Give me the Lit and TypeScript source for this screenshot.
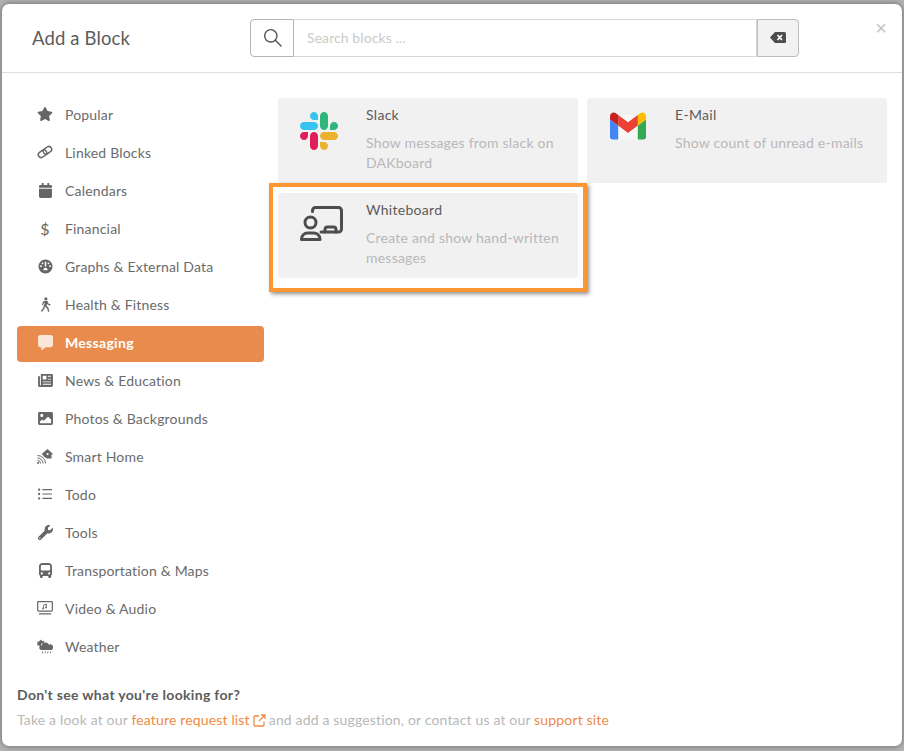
import { LitElement, html, css, svg } from "lit";
import { customElement } from "lit/decorators.js";

const I: Record<string, unknown> = {
  star: svg`<svg viewBox="0 0 576 512" width="16" height="14"><path d="M259.3 17.8L194 150.2 47.9 171.5c-26.2 3.8-36.7 36.1-17.7 54.6l105.7 103-25 145.5c-4.5 26.3 23.2 46 46.4 33.7L288 439.6l130.7 68.7c23.2 12.2 50.9-7.4 46.4-33.7l-25-145.5 105.7-103c19-18.5 8.5-50.8-17.7-54.6L382 150.2 316.7 17.8c-11.7-23.6-45.6-23.9-57.4 0z"/></svg>`,
  link: svg`<svg viewBox="0 0 16 14" width="16" height="14"><g fill="none" stroke="currentColor" stroke-width="1.500" transform="rotate(-35 8 7)"><rect x="0.500" y="4.200" width="9" height="5.600" rx="2.800"/><rect x="6.500" y="4.200" width="9" height="5.600" rx="2.800"/></g></svg>`,
  cal: svg`<svg viewBox="0 0 14 16" width="13" height="15"><path d="M3 0h2v2h4V0h2v2h1.500A1.500 1.500 0 0 1 14 3.500V5H0V3.500A1.500 1.500 0 0 1 1.500 2H3zM0 6h14v8.500a1.500 1.500 0 0 1-1.500 1.500h-11A1.500 1.500 0 0 1 0 14.500z"/></svg>`,
  gauge: svg`<svg viewBox="0 0 16 16" width="15" height="15"><path fill-rule="evenodd" d="M8 .5a7.500 7.500 0 1 1 0 15 7.500 7.500 0 0 1 0-15zM7.200 3v5h1.600V3zM3.200 6.600a1 1 0 1 0 0 2 1 1 0 0 0 0-2zM12.800 6.600a1 1 0 1 0 0 2 1 1 0 0 0 0-2zM4.800 3.600a1 1 0 1 0 0 2 1 1 0 0 0 0-2zM11.200 3.600a1 1 0 1 0 0 2 1 1 0 0 0 0-2zM8 9.200a2.200 2.200 0 0 0-2.200 2.200v.6h4.400v-.6A2.200 2.200 0 0 0 8 9.200z"/></svg>`,
  walk: svg`<svg viewBox="0 0 12 16" width="11" height="15"><circle cx="6.400" cy="1.700" r="1.700"/><path d="M4.600 4.200 6.800 4c1 0 1.500.6 1.800 1.300l.6 1.600 1.900.9c.8.4.3 1.500-.5 1.200L8.300 8 7.800 7l-.6 2.400 2 2.200.9 3.500c.2 1-1.200 1.300-1.500.3l-.8-3-2.300-2.200-.7 2.500-2.300 2.800c-.7.8-1.800-.1-1.200-.9l2-2.500L5.300 6l-1 .4-.7 2c-.3.9-1.600.5-1.300-.4l.8-2.500c.3-.8 1-1.200 1.500-1.300z"/></svg>`,
  chat: svg`<svg viewBox="0 0 16 16" width="15" height="15"><path d="M2.500 0h11A2.500 2.500 0 0 1 16 2.500v8a2.500 2.500 0 0 1-2.500 2.500H8l-3.600 3c-.4.3-.8 0-.8-.4V13H2.500A2.500 2.500 0 0 1 0 10.500v-8A2.500 2.500 0 0 1 2.500 0z"/></svg>`,
  news: svg`<svg viewBox="0 0 16 14" width="15" height="13"><path fill-rule="evenodd" d="M3 0h12a1 1 0 0 1 1 1v11a2 2 0 0 1-2 2H2a2 2 0 0 1-2-2V2.500h2V12a.5.5 0 0 0 1 0zM5 2v4h4V2zM10.500 2v1H14V2zM10.500 5v1H14V5zM5 8v1h9V8zM5 10.500v1h9v-1z"/></svg>`,
  image: svg`<svg viewBox="0 0 16 14" width="15" height="13"><path fill-rule="evenodd" d="M1.500 0h13A1.500 1.500 0 0 1 16 1.500v11a1.500 1.500 0 0 1-1.500 1.500h-13A1.500 1.500 0 0 1 0 12.500v-11A1.500 1.500 0 0 1 1.500 0zM4 2a1.700 1.700 0 1 0 0 3.400A1.700 1.700 0 0 0 4 2zM2 12h12V8.200L10.700 5 6 9.500 4.500 8 2 10.300z"/></svg>`,
  home: svg`<svg viewBox="0 0 16 15" width="16" height="15"><path fill-rule="evenodd" d="M10.500 0 16 5l-.7.8-.8-.7V9.500H9.800L6.200 7V5.200l-.9.7-.6-.8zM9.500 5a1.100 1.100 0 1 0 2.200 0 1.100 1.100 0 0 0-2.200 0z"/><g fill="none" stroke="currentColor" stroke-width="1"><path d="M.5 6.500a8 8 0 0 1 8 8"/><path d="M.5 9a5.500 5.500 0 0 1 5.500 5.500"/><path d="M.5 11.500a3 3 0 0 1 3 3"/></g><circle cx="1" cy="14" r="1"/></svg>`,
  list: svg`<svg viewBox="0 0 16 13" width="14" height="12"><circle cx="1.300" cy="1.500" r="1.300"/><circle cx="1.300" cy="6.500" r="1.300"/><circle cx="1.300" cy="11.500" r="1.300"/><path d="M5 .8h11v1.400H5zM5 5.800h11v1.400H5zM5 10.800h11v1.400H5z"/></svg>`,
  wrench: svg`<svg viewBox="0 0 512 512" width="15" height="15"><path d="M507.73 109.1c-2.24-9.03-13.54-12.09-20.12-5.51l-74.36 74.36-67.88-11.31-11.31-67.88 74.36-74.36c6.62-6.62 3.43-17.9-5.66-20.16-47.38-11.74-99.55.91-136.58 37.93-39.64 39.64-50.55 97.1-34.05 147.2L18.74 402.76c-24.99 24.99-24.99 65.51 0 90.5 24.99 24.99 65.51 24.99 90.5 0l213.21-213.21c50.12 16.71 107.47 5.68 147.37-34.22 37.07-37.07 49.7-89.32 37.91-136.73zM64 472c-13.25 0-24-10.75-24-24 0-13.26 10.75-24 24-24s24 10.74 24 24c0 13.25-10.75 24-24 24z"/></svg>`,
  bus: svg`<svg viewBox="0 0 14 16" width="13" height="15"><path fill-rule="evenodd" d="M4 0h6a4 4 0 0 1 4 4v8a1.500 1.500 0 0 1-1 1.400V15a1 1 0 0 1-1 1h-1a1 1 0 0 1-1-1v-1H4v1a1 1 0 0 1-1 1H2a1 1 0 0 1-1-1v-1.600A1.500 1.500 0 0 1 0 12V4a4 4 0 0 1 4-4zM3.500 2A1.500 1.500 0 0 0 2 3.500V7a1 1 0 0 0 1 1h8a1 1 0 0 0 1-1V3.500A1.500 1.500 0 0 0 10.500 2zM3 10a1.200 1.200 0 1 0 0 2.400A1.200 1.200 0 0 0 3 10zM11 10a1.200 1.200 0 1 0 0 2.400 1.200 1.200 0 0 0 0-2.400z"/></svg>`,
  video: svg`<svg viewBox="0 0 17 15" width="16" height="14"><path fill-rule="evenodd" d="M1.500 0h14A1.500 1.500 0 0 1 17 1.500V10a1.500 1.500 0 0 1-1.500 1.500h-14A1.500 1.500 0 0 1 0 10V1.500A1.500 1.500 0 0 1 1.500 0zM1.300 1.300v8.900h14.400V1.300z"/><path d="M2 13h13v1.500H2zM10.500 3v4a1 1 0 1 1-.8-1V4.200L7.400 4.800V8a1 1 0 1 1-.8-1V3.900z"/></svg>`,
  weather: svg`<svg viewBox="0 0 18 16" width="17" height="15"><path d="M4.500 0l1.200 2L8 1.500l.2 2.200A4 4 0 0 0 4.200 7.500L3.500 8 2 6.500l-2 .3.700-2L0 3l2.200-.6z"/><path d="M5 12a2.500 2.500 0 0 1 0-5 4.500 4.500 0 0 1 8.500-1A3 3 0 0 1 18 9a3 3 0 0 1-3 3z"/><path d="M6 13.500h1l-.6 2h-1zM9 13.500h1l-.6 2h-1zM12 13.500h1l-.6 2h-1zM15 13.500h1l-.6 2h-1z"/></svg>`,
};

const MENU: [string, string][] = [
  ["star", "Popular"], ["link", "Linked Blocks"], ["cal", "Calendars"], ["$", "Financial"],
  ["gauge", "Graphs & External Data"], ["walk", "Health & Fitness"], ["chat", "Messaging"],
  ["news", "News & Education"], ["image", "Photos & Backgrounds"], ["home", "Smart Home"],
  ["list", "Todo"], ["wrench", "Tools"], ["bus", "Transportation & Maps"],
  ["video", "Video & Audio"], ["weather", "Weather"],
];

const slack = svg`<svg viewBox="0 0 122.800 122.800" width="38" height="38">
<path fill="#E01E5A" d="M25.800 77.600c0 7.100-5.800 12.900-12.900 12.900S0 84.700 0 77.600s5.800-12.900 12.900-12.900h12.900v12.900z"/><path fill="#E01E5A" d="M32.300 77.600c0-7.100 5.800-12.900 12.900-12.900s12.900 5.800 12.900 12.900v32.300c0 7.100-5.800 12.900-12.900 12.900s-12.900-5.800-12.900-12.900V77.600z"/>
<path fill="#36C5F0" d="M45.200 25.800c-7.100 0-12.900-5.800-12.900-12.900S38.100 0 45.200 0s12.900 5.800 12.900 12.900v12.900H45.200z"/><path fill="#36C5F0" d="M45.200 32.300c7.100 0 12.900 5.800 12.900 12.900s-5.800 12.900-12.900 12.900H12.900C5.800 58.100 0 52.300 0 45.200s5.800-12.900 12.900-12.900h32.300z"/>
<path fill="#2EB67D" d="M97 45.200c0-7.100 5.800-12.900 12.900-12.900s12.900 5.800 12.900 12.900-5.800 12.900-12.900 12.900H97V45.200z"/><path fill="#2EB67D" d="M90.500 45.200c0 7.100-5.800 12.900-12.900 12.900s-12.900-5.800-12.900-12.900V12.900C64.700 5.800 70.500 0 77.600 0s12.900 5.800 12.900 12.900v32.300z"/>
<path fill="#ECB22E" d="M77.600 97c7.100 0 12.900 5.800 12.900 12.900s-5.800 12.900-12.900 12.900-12.900-5.800-12.900-12.900V97h12.900z"/><path fill="#ECB22E" d="M77.600 90.500c-7.100 0-12.900-5.800-12.900-12.900s5.800-12.900 12.900-12.900h32.300c7.100 0 12.900 5.800 12.900 12.900s-5.800 12.900-12.900 12.900H77.600z"/></svg>`;

const gmail = svg`<svg viewBox="52 42 88 66" width="36" height="28">
<path fill="#f7f7f7" d="M72 48h48v60H72z"/>
<path fill="#4285f4" d="M58 108h14V74L52 59v43c0 3.320 2.690 6 6 6"/><path fill="#34a853" d="M120 108h14c3.320 0 6-2.690 6-6V59l-20 15"/>
<path fill="#fbbc04" d="M120 48v26l20-15v-8c0-7.420-8.470-11.650-14.400-7.200"/><path fill="#ea4335" d="M72 74V48l24 18 24-18v26L96 92"/>
<path fill="#c5221f" d="M52 51v8l20 15V48l-5.600-4.200c-5.940-4.450-14.400-.22-14.400 7.200"/></svg>`;

const board = svg`<svg viewBox="0 0 44 36" width="44" height="36"><g fill="none" stroke="#4d4d4d" stroke-width="3" stroke-linecap="round" stroke-linejoin="round">
<path d="M12.500 5.500V4.500a3 3 0 0 1 3-3H38.500A3 3 0 0 1 41.500 4.500V23a3 3 0 0 1-3 3H21"/><path d="M25 26v-2.500a2.500 2.500 0 0 1 2.500-2.500h6a2.500 2.500 0 0 1 2.500 2.500V26"/>
<circle cx="10.500" cy="16.500" r="5.500"/><path d="M1.500 33.500v-.5a6 6 0 0 1 6-6h6a6.500 6.500 0 0 1 6.500 6v.5z"/></g></svg>`;

@customElement("app-root")
export class AppRoot extends LitElement {
  static styles = css`
    :host { display: block; height: 751px; background: #b3b3b1; overflow: hidden; font-family: "Lato", "Noto Sans", sans-serif; font-size: 14px; color: #6b6b6b; letter-spacing: .18px; }
    .modal { box-sizing: border-box; margin: 0 2px; position: relative; top: 4px; height: 742px; background: #fff; border-radius: 7px; box-shadow: 0 0 6px rgba(0,0,0,.45); }
    .head { display: flex; align-items: center; height: 69px; box-sizing: border-box; border-bottom: 1px solid #dfdfdf; padding: 0 0 0 30px; }
    h1 { margin: 0; width: 218px; font-weight: 400; font-size: 18.500px; color: #5c5c5c; letter-spacing: .13px; }
    .search { display: flex; width: 549px; height: 38px; margin-top: -1px; }
    .s-ico { box-sizing: border-box; width: 44px; border: 1px solid #b5b5b5; border-radius: 4px 0 0 4px; display: flex; align-items: center; justify-content: center; }
    .s-in { flex: 1; border: 1px solid #d8d8d8; border-left: 0; color: #cbcbcb; display: flex; align-items: center; padding-left: 13px; letter-spacing: .08px; }
    .s-btn { box-sizing: border-box; width: 42px; background: #f2f2f2; border: 1px solid #bdbdbd; border-radius: 0 4px 4px 0; display: flex; align-items: center; justify-content: center; }
    .close { position: absolute; right: 15px; top: 15px; color: #c4c4c4; font: 400 20px/18px "Liberation Sans", sans-serif; letter-spacing: 0; }
    .body { display: flex; padding: 25px 0 0 15px; gap: 14px; }
    nav { width: 247px; display: flex; flex-direction: column; gap: 2px; }
    .item { box-sizing: border-box; height: 36px; border-radius: 4px; display: flex; align-items: center; padding: 0 0 4px 20px; color: #6b6b6b; }
    .item.on { background: #e88b4c; color: #fff; font-weight: 700; letter-spacing: .3px; }
    .item.on .ic { color: #fbe6d8; fill: #fbe6d8; }
    .ic { width: 16px; height: 16px; margin-right: 12px; display: flex; align-items: center; justify-content: center; fill: #666; color: #666; flex: none; font-size: 16px; letter-spacing: 0; }
    .grid { display: grid; grid-template-columns: 300px 300px; grid-auto-rows: 85px; gap: 10px 9px; align-content: start; }
    .card { position: relative; display: flex; background: #f1f1f1; border-radius: 3px; }
    .logo { width: 88px; flex: none; display: flex; justify-content: center; padding: 14px 6px 0 0; box-sizing: border-box; }
    .logo.w { padding: 13px 1px 0 0; }
    .t { padding-top: 7px; line-height: 20px; }
    .t b { display: block; font-weight: 400; color: #5c5c5c; margin-bottom: 8px; letter-spacing: .3px; }
    .t span { display: block; color: #b8b8b8; letter-spacing: .22px; }
    .hl { position: absolute; inset: -10px -9px -14px -9px; border: 4px solid #fb9632; box-shadow: 2px 2px 4px rgba(0,0,0,.45); pointer-events: none; }
    footer { padding: 19px 0 0 15px; }
    .q { font-weight: 700; color: #5c5c5c; line-height: 20px; letter-spacing: .32px; }
    .a { margin-top: 5px; line-height: 20px; color: #b8b8b8; display: flex; white-space: pre; align-items: center; letter-spacing: .16px; }
    .a em { font-style: normal; color: #ee8a45; }
    .ext { margin: 0 3px 0 3px; display: flex; }
  `;

  render() {
    return html`<div class="modal">
      <div class="head">
        <h1>Add a Block</h1>
        <div class="search">
          <div class="s-ico"><svg viewBox="0 0 20 20" width="19" height="19" fill="none" stroke="#555" stroke-width="1.500"><circle cx="8.200" cy="8.200" r="6.500"/><path d="M13 13l6 6" stroke-linecap="round"/></svg></div>
          <div class="s-in">Search blocks ...</div>
          <div class="s-btn"><svg viewBox="0 0 16 11" width="16" height="11"><path fill="#4d4d4d" d="M5 0h9.500A1.500 1.500 0 0 1 16 1.500v8a1.500 1.500 0 0 1-1.500 1.500H5L0 5.500z"/><path stroke="#fff" stroke-width="1.700" d="M7.500 3l4.500 5M12 3 7.500 8"/></svg></div>
        </div>
        <div class="close">×</div>
      </div>
      <div class="body">
        <nav>${MENU.map(([ic, label]) => html`<div class="item ${label === "Messaging" ? "on" : ""}"><span class="ic">${ic === "$" ? "$" : I[ic]}</span>${label}</div>`)}</nav>
        <div class="grid">
          <div class="card"><div class="logo">${slack}</div><div class="t"><b>Slack</b><span>Show messages from slack on DAKboard</span></div></div>
          <div class="card"><div class="logo">${gmail}</div><div class="t"><b>E-Mail</b><span>Show count of unread e-mails</span></div></div>
          <div class="card"><div class="logo w">${board}</div><div class="t"><b>Whiteboard</b><span>Create and show hand-written messages</span></div><div class="hl"></div></div>
        </div>
      </div>
      <footer>
        <div class="q">Don't see what you're looking for?</div>
        <div class="a">Take a look at our <em>feature request list</em><span class="ext"><svg viewBox="0 0 13 13" width="13" height="13" fill="none" stroke="#ee8a45" stroke-width="1.300"><path d="M6 2H2a1 1 0 0 0-1 1v8a1 1 0 0 0 1 1h8a1 1 0 0 0 1-1V7.500M8 1h4v4M12 1 6 7"/></svg></span>and add a suggestion, or contact us at our <em>support site</em></div>
      </footer>
    </div>`;
  }
}
